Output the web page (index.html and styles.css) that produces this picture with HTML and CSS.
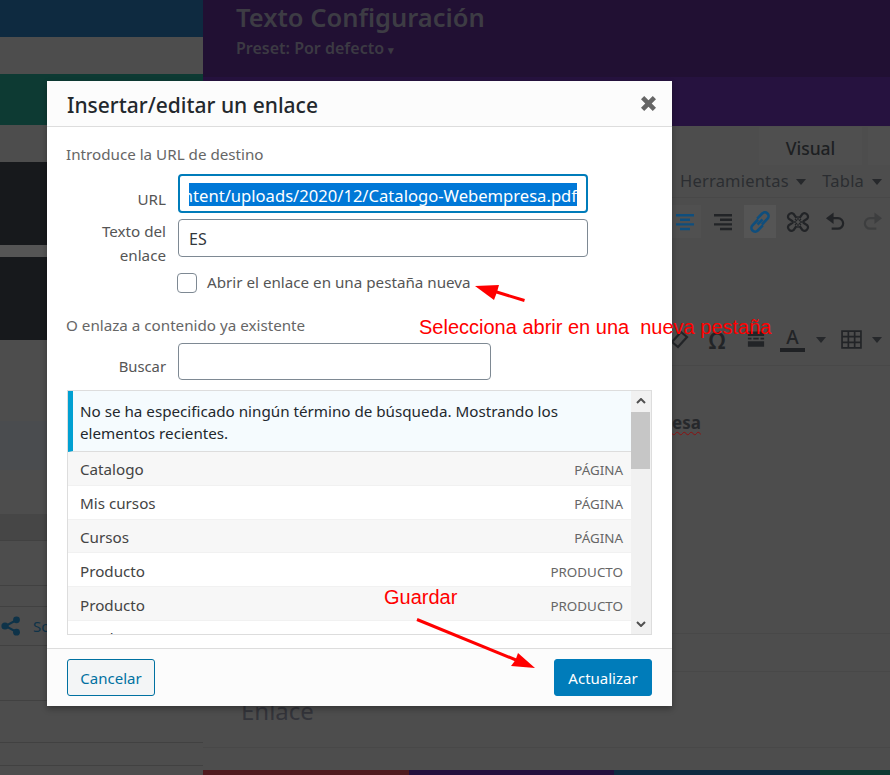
FILE: index.html
```html
<!DOCTYPE html>
<html lang="es">
<head>
<meta charset="utf-8">
<title>Insertar/editar un enlace</title>
<link rel="stylesheet" href="styles.css">
</head>
<body>
<div class="page">
  <aside class="side">
    <div class="band blue"></div>
    <div class="band gray37"></div>
    <div class="band green"></div>
    <div class="band gray37"></div>
    <div class="band dark"></div>
    <div class="band gap12"></div>
    <div class="band dark"></div>
    <div class="band gray81"></div>
    <div class="band bluish"></div>
    <div class="band gray44"></div>
    <div class="band darker"></div>
    <div class="band line h45"></div>
    <div class="band line h21"></div>
    <div class="band line share-row">
      <svg class="share" viewBox="0 0 20 20" aria-hidden="true">
        <path class="share-line" d="M15.5 4 4.5 10l11 6"/>
        <circle cx="15.5" cy="3.800" r="3.400"/><circle cx="4" cy="10" r="3.600"/><circle cx="15.500" cy="16.200" r="3.400"/>
      </svg>
      <span class="share-text">Social</span>
    </div>
    <div class="band line h55"></div>
    <div class="band line h42"></div>
    <div class="band line h23"></div>
    <div class="band line h10"></div>
  </aside>

  <main class="main">
    <header class="head">
      <div class="head-top">
        <div class="head-title">Texto Configuración</div>
        <div class="head-preset">Preset: Por defecto <span class="preset-caret">▾</span></div>
      </div>
      <div class="head-bottom"></div>
    </header>
    <div class="tabs">
      <div class="tab tab-visual">Visual</div>
      <div class="tab tab-other"></div>
    </div>
    <div class="menus">
      <span class="menu-item">Herramientas <i class="caret"></i></span>
      <span class="menu-item">Tabla <i class="caret"></i></span>
    </div>
    <div class="tools">
      <span class="tool tool-on">
        <svg viewBox="0 0 20 20" class="ico ico-blue"><path d="M1 2h18v2.400H1zM5 6.600h10V9H5zM1 11.200h18v2.400H1zM5 15.800h10v2.400H5z"/></svg>
      </span>
      <span class="tool tool-right">
        <svg viewBox="0 0 20 20" class="ico"><path d="M1 2h18v2.400H1zM7 6.600h12V9H7zM1 11.200h18v2.400H1zM7 15.800h12v2.400H7z"/></svg>
      </span>
      <span class="tool tool-link">
        <svg viewBox="0 0 24 24" class="ico-link"><path d="M9.500 14.500 14.500 9.500M10 9.500l-5.500 5.800a3.700 3.700 0 0 0 5.300 5.200l5-5.200M14 14.500l5.500-5.800a3.700 3.700 0 0 0-5.300-5.200l-5 5.200"/></svg>
      </span>
      <span class="tool tool-unlink">
        <svg viewBox="0 0 24 24" class="ico-unlink"><path d="M10.500 8 7.500 3.800a3.500 3.500 0 0 0-4.800 4.900L7 11.500M13.500 8l3-4.200a3.500 3.500 0 0 1 4.800 4.900L17 11.500M10.500 16l-3 4.200a3.500 3.500 0 0 1-4.800-4.900L7 12.500M13.500 16l3 4.200a3.500 3.500 0 0 0 4.800-4.900L17 12.500"/><path class="rays" d="M12 6v4M12 14v4M6 12h4M14 12h4M9 9l2 2M15 9l-2 2M9 15l2-2M15 15l-2-2"/></svg>
      </span>
      <span class="tool tool-undo">
        <svg viewBox="0 0 22 20" class="ico-undo"><path d="M3 6h10.500a5.500 5.500 0 0 1 0 11H7"/><path class="arrow-fill" d="M9 0v12L1 6z"/></svg>
      </span>
      <span class="tool tool-redo">
        <svg viewBox="0 0 22 20" class="ico-undo"><path d="M19 6H8.500a5.500 5.500 0 0 0 0 11H15"/><path class="arrow-fill" d="M13 0v12l8-6z"/></svg>
      </span>
    </div>
    <div class="tools2">
      <svg viewBox="0 0 20 20" class="ico-eraser"><path d="m12 2 6 5-9 10-6-5z"/></svg>
      <span class="omega">Ω</span>
      <svg viewBox="0 0 20 20" class="ico-break"><path d="M1 1h18v5H1zM1 8h4v2H1zM7 8h6v2H7zM15 8h4v2h-4zM1 12h18v6H1z"/></svg>
      <span class="font-a">A</span>
      <i class="caret caret-a"></i>
      <svg viewBox="0 0 20 18" class="ico-table"><path d="M1 1h18v16H1zM7 1v16M13 1v16M1 6.300h18M1 11.700h18"/></svg>
      <i class="caret caret-t"></i>
    </div>
    <div class="editor"><span class="misspelled">esa</span></div>
    <div class="lower">
      <div class="lower-row r-a"></div>
      <div class="lower-row r-b"><div class="enlace">Enlace</div></div>
      <div class="lower-row r-c"></div>
    </div>
    <div class="stripe">
      <span class="st st-red"></span><span class="st st-purple"></span><span class="st st-blue"></span><span class="st st-green"></span>
    </div>
  </main>
</div>

<section class="modal">
  <div class="modal-head">
    <h1 class="modal-title">Insertar/editar un enlace</h1>
    <svg viewBox="0 0 14 14" class="modal-close" aria-label="Cerrar"><path d="M3 0 7 4l4-4 3 3-4 4 4 4-3 3-4-4-4 4-3-3 4-4-4-4z"/></svg>
  </div>
  <div class="modal-body">
    <div class="hint">Introduce la URL de destino</div>
    <div class="field field-url">
      <label class="lab lab-url">URL</label>
      <div class="url-box"><div class="url-sel"><span>ntent/uploads/2020/12/Catalogo-Webempresa.pdf</span></div></div>
    </div>
    <div class="field field-text">
      <label class="lab">Texto del<br>enlace</label>
      <input class="inp inp-text" type="text" value="ES">
    </div>
    <div class="check-row">
      <input class="chk" type="checkbox">
      <span class="chk-label">Abrir el enlace en una pestaña nueva</span>
    </div>
    <div class="hint hint-2">O enlaza a contenido ya existente</div>
    <div class="field field-search">
      <label class="lab lab-search">Buscar</label>
      <input class="inp inp-search" type="text">
    </div>
    <div class="results">
      <div class="results-list">
        <div class="notice">No se ha especificado ningún término de búsqueda. Mostrando los elementos recientes.</div>
        <div class="row row-alt"><span>Catalogo</span><span class="kind">PÁGINA</span></div>
        <div class="row"><span>Mis cursos</span><span class="kind">PÁGINA</span></div>
        <div class="row row-alt"><span>Cursos</span><span class="kind">PÁGINA</span></div>
        <div class="row"><span>Producto</span><span class="kind">PRODUCTO</span></div>
        <div class="row row-alt"><span>Producto</span><span class="kind">PRODUCTO</span></div>
        <div class="row"><span>Producto</span></div>
      </div>
      <div class="scrollbar">
        <svg viewBox="0 0 10 6" class="sb-arrow sb-up"><path d="M1 5l4-4 4 4"/></svg>
        <div class="sb-thumb"></div>
        <svg viewBox="0 0 10 6" class="sb-arrow sb-down"><path d="M1 1l4 4 4-4"/></svg>
      </div>
    </div>
  </div>
  <div class="modal-foot">
    <button class="btn btn-cancel" type="button">Cancelar</button>
    <button class="btn btn-update" type="button">Actualizar</button>
  </div>
</section>

<div class="note note-1">Selecciona abrir en una&nbsp; nueva pestaña</div>
<div class="note note-2">Guardar</div>
<svg class="arrows" viewBox="0 0 890 775" aria-hidden="true">
  <path class="arrow-line" d="M524.500 300.500 495 291.500"/>
  <path class="arrow-head" d="M475 286 499 285 497 292 494 300z"/>
  <path class="arrow-line" d="M417 619.500 516 660"/>
  <path class="arrow-head" d="M535 668 518 653 515.500 660 511 666z"/>
</svg>
```

FILE: styles.css
```css
* { box-sizing: border-box; }
html, body { margin: 0; padding: 0; }
body {
  width: 890px;
  height: 775px;
  overflow: hidden;
  position: relative;
  font-family: "Noto Sans", "Open Sans", sans-serif;
  background: #4d4d4d;
}
.page { display: flex; width: 890px; height: 775px; }

/* left column */
.side { width: 203px; flex: none; display: flex; flex-direction: column; overflow: hidden; }
.band { flex: none; }
.blue { height: 37px; background: #0e2a40; }
.gray37 { height: 37px; background: #4d4d4d; }
.green { height: 51px; background: #0d3a33; }
.dark { height: 83px; background: #17191c; }
.gap12 { height: 12px; background: #555; }
.gray81 { height: 81px; background: #4d4d4d; }
.bluish { height: 49px; background: #4a4c4f; }
.gray44 { height: 44px; background: #4d4d4d; }
.darker { height: 26px; background: #464646; }
.line { background: #4d4d4d; border-top: 1px solid #414141; }
.h45 { height: 45px; }
.h21 { height: 21px; }
.h55 { height: 55px; }
.h42 { height: 42px; }
.h23 { height: 23px; }
.h10 { height: 10px; }
.share-row { height: 39px; display: flex; align-items: center; gap: 12px; padding-left: 1px; }
.share { width: 20px; height: 20px; flex: none; fill: #0e3349; }
.share-line { fill: none; stroke: #0e3349; stroke-width: 2; }
.share-text { color: #0e3349; font-size: 15px; }

/* right column */
.main { width: 687px; flex: none; display: flex; flex-direction: column; overflow: hidden; }
.head { height: 126px; flex: none; }
.head-top { height: 77px; background: #211033; padding: 2px 0 0 33px; }
.head-bottom { height: 49px; background: #26123f; }
.head-title { font-size: 25.5px; line-height: 30px; font-weight: 600; color: #3d3c44; white-space: nowrap; }
.head-preset { font-size: 16px; line-height: 20px; margin-top: 6px; font-weight: 600; color: #3c3a43; }
.preset-caret { font-size: 11px; }

.tabs { height: 39px; flex: none; display: flex; justify-content: flex-end; gap: 6px; padding-top: 1px; }
.tab { background: #4f4f4f; }
.tab-visual { width: 103px; text-align: center; font-size: 17.500px; line-height: 42px; font-weight: 500; color: #1d1f22; }
.tab-other { width: 22px; }

.menus {
  height: 33px; flex: none; display: flex; gap: 16px; padding: 1px 0 0 477px;
  border-bottom: 1px solid #484848; color: #2b2d31; font-size: 16.500px; line-height: 30px; letter-spacing: .2px;
  white-space: nowrap;
}
.caret { display: inline-block; width: 0; height: 0; border: 5px solid transparent; border-top: 6px solid #26282b; border-bottom: 0; margin-left: 3px; vertical-align: 2px; }

.tools { height: 33px; margin-top: 7px; flex: none; display: flex; align-items: center; padding-left: 469px; }
.tool { height: 33px; display: flex; align-items: center; justify-content: center; flex: none; }
.tool-on { width: 29px; background: #505050; justify-content: flex-end; padding-right: 6px; }
.tool-right { width: 43px; }
.tool-link { width: 32px; background: #555; }
.tool-unlink { width: 44px; }
.tool-undo { width: 30px; }
.tool-redo { width: 44px; opacity: .35; }
.ico { width: 20px; height: 20px; fill: #222427; }
.ico-blue { fill: #0f4e7d; }
.ico-link { width: 24px; height: 24px; fill: none; stroke: #0f4e7d; stroke-width: 2.600; }
.ico-unlink { width: 24px; height: 24px; fill: none; stroke: #222427; stroke-width: 2.200; }
.rays { stroke-width: 1.300; }
.ico-undo { width: 21px; height: 20px; fill: none; stroke: #222427; stroke-width: 2.300; }
.arrow-fill { fill: #222427; stroke: none; }

.tools2 { height: 33px; margin-top: 85px; flex: none; display: flex; align-items: center; padding-left: 466px; color: #222427; }
.ico-eraser { width: 20px; height: 20px; fill: none; stroke: #222427; stroke-width: 2.200; flex: none; }
.omega { font-size: 23px; font-weight: 600; margin-left: 18px; line-height: 24px; width: 20px; text-align: center; }
.ico-break { width: 18px; height: 19px; fill: #222427; margin-left: 20px; flex: none; }
.font-a {
  font-size: 19px; font-weight: 500; line-height: 21px; width: 25px; text-align: center; margin-left: 15px;
  border-bottom: 4px solid #1f2124; color: #222427; height: 25px;
}
.caret-a { margin-left: 11px; }
.ico-table { width: 21px; height: 19px; fill: none; stroke: #222427; stroke-width: 1.600; margin-left: 15px; flex: none; }
.caret-t { margin-left: 10px; }

.editor {
  flex: none; height: 268px; margin-top: 9px; padding: 47px 0 0 469px; border-top: 1px solid #484848;
  font-size: 17px; line-height: 20px; font-weight: 700; color: #26282b;
}
.misspelled { text-decoration: underline wavy #8c1010 1px; text-underline-offset: 2px; }

.lower { flex: 1; display: flex; flex-direction: column; }
.lower-row { flex: none; border-top: 1px solid #484848; }
.r-a { height: 38px; }
.r-b { height: 76px; padding: 22px 0 0 38px; }
.r-c { height: 23px; }
.enlace { font-size: 24px; line-height: 34px; color: #33343a; }
.stripe { flex: none; height: 5px; display: flex; }
.st { height: 5px; flex: none; }
.st-red { width: 206px; background: #4f1a1e; }
.st-purple { width: 205px; background: #23103d; }
.st-blue { width: 206px; background: #0e2a40; }
.st-green { width: 70px; background: #0d3a33; }

/* modal */
.modal {
  position: absolute; left: 47px; top: 81px; width: 625px; height: 625px;
  background: #fff; display: flex; flex-direction: column;
  box-shadow: 0 3px 6px rgba(0,0,0,.3);
}
.modal-head {
  height: 46px; flex: none; display: flex; align-items: center; justify-content: space-between;
  padding: 0 16px 0 20px; background: #fcfcfc; border-bottom: 1px solid #ddd;
}
.modal-title { margin: 2px 0 0; font-size: 21px; line-height: 30px; font-weight: 500; color: #23282d; }
.modal-close { width: 15px; height: 15px; fill: #666; flex: none; }
.modal-body { flex: 1; padding: 17px 0 0 19px; overflow: hidden; }
.hint { font-size: 15.200px; line-height: 20px; color: #666; }
.hint-2 { margin-top: 22px; }
.field { display: flex; align-items: flex-start; gap: 12px; }
.lab { width: 100px; flex: none; text-align: right; font-size: 15.200px; line-height: 24px; color: #555; }
.field-url { margin-top: 10px; }
.lab-url { padding-top: 13px; }
.url-box {
  width: 410px; height: 39px; border: 2px solid #007cba; border-radius: 4px;
  padding: 7px 9px 6px 9px; background: #fff;
}
.url-sel {
  height: 23px; overflow: hidden; display: flex; justify-content: flex-end; background: #0078d7; color: #fff;
  font-size: 16.600px; line-height: 25px; white-space: nowrap;
}
.field-text { margin-top: 6px; }
.inp {
  display: block; height: 38px; border: 1px solid #7e8993; border-radius: 4px; background: #fff; padding: 2px 10px 0;
  font-family: inherit; font-size: 16px; color: #32373c; outline: 0;
}
.inp-text { width: 410px; }
.check-row { margin: 6px 0 0 111px; height: 20px; display: flex; align-items: flex-start; gap: 10px; }
.chk {
  appearance: none; width: 20px; height: 20px; margin: 0; border: 1px solid #7e8993; border-radius: 4px; background: #fff; flex: none;
}
.chk-label { font-size: 15.200px; line-height: 20px; color: #555; margin-top: -1px; }
.field-search { margin-top: 8px; }
.lab-search { padding-top: 11px; font-size: 14.800px; }
.inp-search { width: 313px; height: 37px; }
.results {
  margin: 10px 0 0 1px; width: 585px; height: 245px; border: 1px solid #ddd; display: flex; overflow: hidden;
}
.results-list { width: 563px; flex: none; overflow: hidden; }
.notice {
  height: 61px; padding: 9px 12px 0 7px; background: #f5fbfe; border-left: 5px solid #00a0d2; border-bottom: 1px solid #ddd;
  font-size: 15.200px; line-height: 22px; color: #23282d;
}
.row {
  height: 33.800px; display: flex; justify-content: space-between; align-items: center; padding: 2px 8px 0 12px;
  border-bottom: 1px solid #f1f1f1; background: #fff; font-size: 15.200px; color: #444; flex: none;
}
.row-alt { background: #f7f7f7; }
.kind { font-size: 13.400px; color: #666; padding-top: 2px; }
.scrollbar { width: 20px; flex: none; background: #f1f1f1; display: flex; flex-direction: column; align-items: center; }
.sb-arrow { width: 10px; height: 6px; fill: none; stroke: #505050; stroke-width: 2; flex: none; }
.sb-up { margin-top: 7px; }
.sb-thumb { width: 19px; height: 57px; background: #c6c6c6; margin: 8px 1px 0 0; flex: none; }
.sb-down { margin-top: auto; margin-bottom: 7px; }
.modal-foot {
  height: 58px; flex: none; display: flex; justify-content: space-between; padding: 10px 20px 0;
  background: #fcfcfc; border-top: 1px solid #ddd;
}
.btn { height: 37px; border-radius: 3px; font-family: inherit; font-size: 15px; padding: 1px 0 0; }
.btn-cancel { width: 88px; background: #f3f5f6; border: 1px solid #0071a1; color: #0071a1; }
.btn-update { width: 98px; background: #007cba; border: 1px solid #007cba; color: #fff; }

/* annotations */
.note { position: absolute; font-family: "Liberation Sans", Arial, sans-serif; font-size: 20px; line-height: 22px; color: #f00; white-space: nowrap; }
.note-1 { left: 419px; top: 316px; }
.note-2 { left: 384px; top: 586px; }
.arrows { position: absolute; left: 0; top: 0; width: 890px; height: 775px; pointer-events: none; }
.arrow-line { fill: none; stroke: #f00; stroke-width: 3; }
.arrow-head { fill: #f00; }
```
